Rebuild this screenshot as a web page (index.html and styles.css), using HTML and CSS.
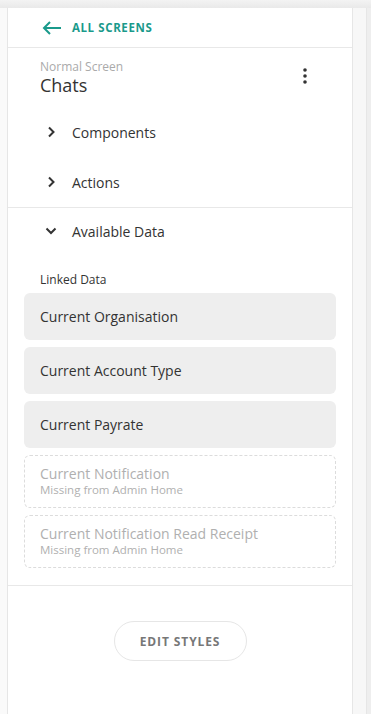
FILE: index.html
```html
<!DOCTYPE html>
<html lang="en">
  <head>
    <meta charset="UTF-8" />
    <title>Chats - Screen</title>
    <link rel="stylesheet" href="styles.css">
  </head>
  <body>
    <div class="topshade"></div>
    <div class="app">
      <div class="gutter"></div>
      <aside class="panel">
        <a class="back">
          <svg width="20" height="14" viewBox="0 0 20 14">
            <path d="M19 7H2M8 1L2 7l6 6" fill="none" stroke="#1a9a8b" stroke-width="2" />
          </svg>
          <span>ALL SCREENS</span>
        </a>

        <div class="screen-head">
          <div>
            <div class="kind">Normal Screen</div>
            <div class="name">Chats</div>
          </div>
          <svg class="kebab" width="6" height="16" viewBox="0 0 6 16">
            <circle cx="3" cy="2" r="1.8" fill="#333" />
            <circle cx="3" cy="8" r="1.8" fill="#333" />
            <circle cx="3" cy="14" r="1.8" fill="#333" />
          </svg>
        </div>

        <div class="row">
          <svg width="10" height="12" viewBox="0 0 10 12"><path d="M3 1.5l4.5 4.5L3 10.5" fill="none" stroke="#333" stroke-width="2" /></svg>
          <span>Components</span>
        </div>
        <div class="row">
          <svg width="10" height="12" viewBox="0 0 10 12"><path d="M3 1.5l4.5 4.5L3 10.5" fill="none" stroke="#333" stroke-width="2" /></svg>
          <span>Actions</span>
        </div>

        <div class="section">
          <div class="row open">
            <svg width="12" height="10" viewBox="0 0 12 10"><path d="M1.5 2.5L6 7l4.5-4.5" fill="none" stroke="#333" stroke-width="2" /></svg>
            <span>Available Data</span>
          </div>
          <div class="label">Linked Data</div>
          <div class="cards">
            <div class="card">Current Organisation</div>
            <div class="card">Current Account Type</div>
            <div class="card">Current Payrate</div>
            <div class="card missing">
              <div>Current Notification</div>
              <small>Missing from Admin Home</small>
            </div>
            <div class="card missing">
              <div>Current Notification Read Receipt</div>
              <small>Missing from Admin Home</small>
            </div>
          </div>
        </div>

        <div class="footer">
          <button class="edit-btn">EDIT STYLES</button>
        </div>
      </aside>
      <div class="side"></div>
      <div class="scroll"></div>
    </div>
  </body>
</html>
```

FILE: styles.css
```css
body {
  margin: 0;
  font-family: "Open Sans", sans-serif;
  background: #fafafa;
  color: #333;
  height: 714px;
  overflow: hidden;
}
.topshade {
  height: 8px;
  background: linear-gradient(#f3f3f3, #e9e9e9);
}
.app {
  display: flex;
  height: 706px;
}
.gutter {
  width: 7px;
  background: #fafafa;
}
.panel {
  width: 345px;
  background: #fff;
  border-left: 1px solid #e6e6e6;
  border-right: 1px solid #e6e6e6;
}
.side {
  width: 13px;
  background: #f7f7f7;
  border-right: 1px solid #e6e6e6;
}
.scroll {
  width: 4px;
  background: #eeeeee;
}
.back {
  display: flex;
  align-items: center;
  gap: 10px;
  height: 39px;
  padding-left: 34px;
  border-bottom: 1px solid #e8e8e8;
  color: #1a9a8b;
  font-size: 11.5px;
  font-weight: 700;
  letter-spacing: 0.6px;
}
.screen-head {
  display: flex;
  justify-content: space-between;
  align-items: center;
  padding: 11px 44px 0 32px;
}
.kind {
  font-size: 12px;
  line-height: 16px;
  color: #aaa;
}
.name {
  font-size: 18px;
  line-height: 20px;
  font-weight: 500;
}
.kebab {
  margin-top: -3px;
}
.row {
  display: flex;
  align-items: center;
  gap: 16px;
  height: 50px;
  padding-left: 38px;
  font-size: 14px;
}
.row.open {
  gap: 15px;
  height: 46px;
  padding-left: 37px;
}
.screen-head + .row {
  margin-top: 12px;
}
.section {
  border-top: 1px solid #e8e8e8;
  border-bottom: 1px solid #e8e8e8;
  padding-bottom: 17px;
}
.label {
  font-size: 12px;
  line-height: 16px;
  padding: 18px 32px 5px;
}
.cards {
  display: flex;
  flex-direction: column;
  gap: 7px;
  margin: 0 16px;
}
.card {
  background: #eeeeee;
  border-radius: 6px;
  height: 47px;
  display: flex;
  align-items: center;
  padding-left: 16px;
  font-size: 14px;
}
.card.missing {
  background: #fff;
  border: 1px dashed #dcdcdc;
  height: 51px;
  flex-direction: column;
  align-items: flex-start;
  justify-content: center;
  padding-left: 15px;
  color: #b0b0b0;
  line-height: 16px;
}
.card.missing small {
  font-size: 11.5px;
  line-height: 14px;
  margin-top: 1px;
}
.footer {
  display: flex;
  justify-content: center;
  padding-top: 35px;
}
.edit-btn {
  width: 133px;
  height: 40px;
  border: 1px solid #e6e6e6;
  border-radius: 20px;
  background: #fff;
  color: #777;
  font-family: "Open Sans", sans-serif;
  font-size: 12px;
  font-weight: 700;
  letter-spacing: 0.9px;
}
```
